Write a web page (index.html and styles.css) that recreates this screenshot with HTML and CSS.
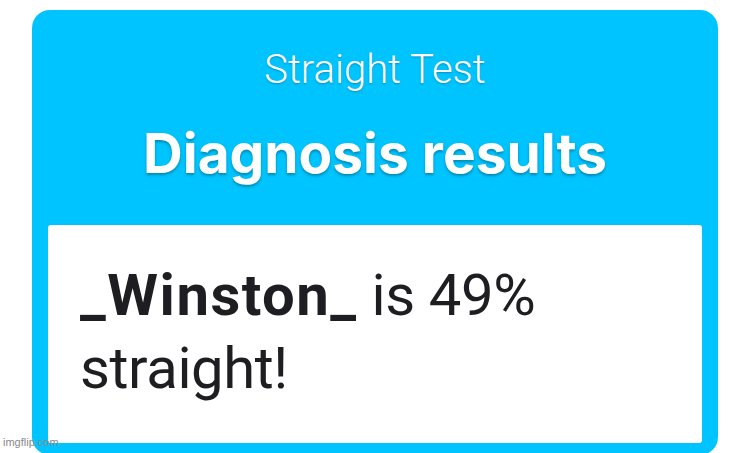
FILE: index.html
```html
<!DOCTYPE html>
<html lang="en">
<head>
    <meta charset="UTF-8">
    <meta name="viewport" content="width=device-width, initial-scale=1.0">
    <title>Straight Test</title>
    <link rel="stylesheet" href="styles.css">
</head>
<body>
    <div class="card">
        <div class="card-head">
            <div class="test-name">Straight Test</div>
            <h1 class="title">Diagnosis results</h1>
        </div>
        <div class="result">
            <p class="result-text"><b>_Winston_</b> is 49% straight!</p>
        </div>
    </div>
    <span class="watermark">imgflip.com</span>
</body>
</html>
```

FILE: styles.css
```css
body {
    font-family: Roboto, "Noto Sans", sans-serif;
    background-color: #fff;
    margin: 0;
    padding: 10px 32px 0;
    height: 453px;
    box-sizing: border-box;
    overflow: hidden;
}
.card {
    background-color: #00c4ff;
    border-radius: 18px;
    padding: 0 16px 12px;
    display: flex;
    flex-direction: column;
}
.card-head {
    text-align: center;
    color: #fff;
    padding-top: 38px;
    height: 215px;
    box-sizing: border-box;
}
.test-name {
    font-size: 40px;
    line-height: 44px;
    font-weight: 300;
    text-shadow: 0 1px 2px rgba(0, 0, 0, 0.25);
}
.title {
    font-family: Inter, Roboto, sans-serif;
    font-size: 55px;
    line-height: 60px;
    font-weight: 700;
    margin: 31px 0 0;
    text-shadow: 0 2px 3px rgba(0, 0, 0, 0.3);
}
.result {
    background-color: #fff;
    border-radius: 3px;
    height: 218px;
    padding: 34px 32px 0;
    box-sizing: border-box;
}
.result-text {
    margin: 0;
    font-size: 58px;
    line-height: 73px;
    letter-spacing: -0.4px;
    color: #1e1e22;
    width: 500px;
}
.result-text b {
    font-weight: 700;
    letter-spacing: 1.5px;
}
.watermark {
    position: absolute;
    left: 3px;
    top: 436px;
    font-family: "Liberation Sans", Arial, sans-serif;
    font-size: 11px;
    color: #8a8a8a;
}
```
